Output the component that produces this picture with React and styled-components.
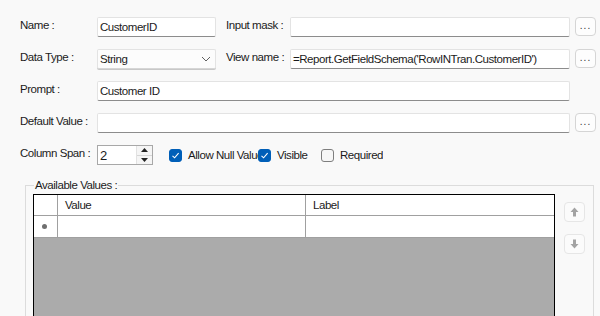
import React from 'react';
import styled, { createGlobalStyle } from 'styled-components';

const GlobalStyle = createGlobalStyle`
  html, body {
    margin: 0;
    padding: 0;
    background: #f9f9f9;
    overflow: hidden;
  }
  body {
    font-family: "Liberation Sans", Arial, sans-serif;
    font-size: 11.5px;
    letter-spacing: -0.45px;
    color: #1b1b1b;
  }
`;

const Page = styled.div`
  width: 600px;
  height: 316px;
  background: #f9f9f9;
  overflow: hidden;
`;

const Form = styled.div`
  display: grid;
  grid-template-columns: 77px 119px 74px 280px 5px 21px;
  grid-auto-rows: 20px;
  row-gap: 12px;
  padding: 17px 0 0 20px;
`;

const Label = styled.div`
  grid-column: ${p => p.$col || 1};
  padding-left: ${p => p.$indent || 0}px;
  padding-top: 2px;
  white-space: nowrap;
`;

const TextBox = styled.div`
  grid-column: ${p => p.$span || 'auto'};
  box-sizing: border-box;
  height: 20px;
  background: #ffffff;
  border: 1px solid #e3e3e3;
  border-bottom-color: #8c8c8c;
  border-radius: 2px;
  padding: 0 2px;
  display: flex;
  align-items: center;
  white-space: nowrap;
  overflow: hidden;
`;

const Select = styled(TextBox)`
  justify-content: space-between;
  padding-right: 4px;
  border-bottom-color: #d6d6d6;
  box-shadow: 0 1px 0 #c8c8c8;
  background: #fcfcfc;
`;

const DotsButton = styled.div`
  grid-column: 6;
  box-sizing: border-box;
  height: 19px;
  border: 1px solid #d5d5d5;
  border-radius: 4px;
  background: #fdfdfd;
  display: flex;
  align-items: center;
  justify-content: center;
  font-size: 10px;
  letter-spacing: 1px;
  padding-bottom: 3px;
  color: #333;
`;

const OptionsRow = styled.div`
  grid-column: 2 / 7;
  display: flex;
  align-items: center;
`;

const Spinner = styled.div`
  box-sizing: border-box;
  width: 56px;
  height: 20px;
  border: 1px solid #a8a8a8;
  background: #fff;
  display: flex;
  align-items: stretch;
  margin-right: 16px;
`;

const SpinValue = styled.div`
  flex: 1;
  padding-left: 2px;
  display: flex;
  align-items: center;
  font-size: 13px;
`;

const SpinButtons = styled.div`
  width: 15px;
  display: flex;
  flex-direction: column;
  border-left: 1px solid #e2e2e2;
  background: #f5f5f5;
`;

const SpinButton = styled.div`
  flex: 1;
  display: flex;
  align-items: center;
  justify-content: center;
  border-bottom: ${p => (p.$top ? '1px solid #d6d6d6' : 'none')};
`;

const CheckItem = styled.div`
  display: flex;
  align-items: center;
  gap: 6px;
  width: ${p => (p.$width ? `${p.$width}px` : 'auto')};
  overflow: hidden;
  white-space: nowrap;
  flex-shrink: 0;
`;

const Box = styled.div`
  box-sizing: border-box;
  flex-shrink: 0;
  width: 13px;
  height: 13px;
  border-radius: 3px;
  background: ${p => (p.$checked ? '#005fb8' : '#f6f6f6')};
  border: 1px solid ${p => (p.$checked ? '#005fb8' : '#7e7e7e')};
  display: flex;
  align-items: center;
  justify-content: center;
`;

const GroupBox = styled.fieldset`
  margin: 14px 7px 0 25px;
  padding: 3px 8px 0 7px;
  border: 1px solid #dcdcdc;
  border-bottom: none;
  height: 140px;
  display: flex;
  gap: 9px;
  align-items: flex-start;
`;

const Legend = styled.legend`
  padding: 0 1px;
  margin-left: 1px;
  line-height: 12px;
`;

const Grid = styled.div`
  box-sizing: border-box;
  width: 522px;
  height: 140px;
  border: 1px solid #000;
  background: #ababab;
  display: flex;
  flex-direction: column;
`;

const GridRow = styled.div`
  box-sizing: border-box;
  display: grid;
  grid-template-columns: 24px 248px 1fr;
  height: ${p => p.$h}px;
  background: #fff;
  border-bottom: 1px solid #a0a0a0;
`;

const Cell = styled.div`
  display: flex;
  align-items: center;
  justify-content: ${p => (p.$center ? 'center' : 'flex-start')};
  padding-left: ${p => (p.$center ? 0 : 7)}px;
  border-right: ${p => (p.$last ? 'none' : '1px solid #a0a0a0')};
`;

const NewRowMark = styled.div`
  width: 5px;
  height: 5px;
  border-radius: 50%;
  background: #6f6f6f;
  margin-right: 2px;
`;

const MoveButtons = styled.div`
  display: flex;
  flex-direction: column;
  gap: 12px;
  padding-top: 8px;
`;

const MoveButton = styled.div`
  box-sizing: border-box;
  width: 21px;
  height: 20px;
  border: 1px solid #e6e6e6;
  border-radius: 4px;
  background: #fbfbfb;
  display: flex;
  align-items: center;
  justify-content: center;
`;

const Check = () => (
  <svg width="9" height="9" viewBox="0 0 9 9">
    <path d="M1.5 4.8 L3.6 6.8 L7.6 2.2" fill="none" stroke="#fff" strokeWidth="1.1" />
  </svg>
);

const Chevron = () => (
  <svg width="10" height="6" viewBox="0 0 10 6">
    <path d="M1 1 L5 5 L9 1" fill="none" stroke="#606060" strokeWidth="1" />
  </svg>
);

const Tri = ({ up }) => (
  <svg width="7" height="4" viewBox="0 0 7 4">
    <path d={up ? 'M0 4 L3.5 0 L7 4 Z' : 'M0 0 L3.5 4 L7 0 Z'} fill="#222" />
  </svg>
);

const Arrow = ({ up }) => (
  <svg width="9" height="10" viewBox="0 0 9 10">
    <path
      d={up ? 'M4.5 0.5 L8.5 5 L6 5 L6 9.5 L3 9.5 L3 5 L0.5 5 Z' : 'M4.5 9.5 L8.5 5 L6 5 L6 0.5 L3 0.5 L3 5 L0.5 5 Z'}
      fill="#a3a3a3"
    />
  </svg>
);

export default function App() {
  return (
    <Page>
      <GlobalStyle />
      <Form>
        <Label>Name :</Label>
        <TextBox>CustomerID</TextBox>
        <Label $col={3} $indent={10}>Input mask :</Label>
        <TextBox $span="4" />
        <DotsButton>...</DotsButton>

        <Label>Data Type :</Label>
        <Select>
          <span>String</span>
          <Chevron />
        </Select>
        <Label $col={3} $indent={10}>View name :</Label>
        <TextBox $span="4">=Report.GetFieldSchema('RowINTran.CustomerID')</TextBox>
        <DotsButton>...</DotsButton>

        <Label>Prompt :</Label>
        <TextBox $span="2 / 5">Customer ID</TextBox>

        <Label>Default Value :</Label>
        <TextBox $span="2 / 5" />
        <DotsButton>...</DotsButton>

        <Label>Column Span :</Label>
        <OptionsRow>
          <Spinner>
            <SpinValue>2</SpinValue>
            <SpinButtons>
              <SpinButton $top><Tri up /></SpinButton>
              <SpinButton><Tri /></SpinButton>
            </SpinButtons>
          </Spinner>
          <CheckItem $width={89}>
            <Box $checked><Check /></Box>
            Allow Null Value
          </CheckItem>
          <CheckItem $width={63}>
            <Box $checked><Check /></Box>
            Visible
          </CheckItem>
          <CheckItem>
            <Box />
            Required
          </CheckItem>
        </OptionsRow>
      </Form>

      <GroupBox>
        <Legend>Available Values :</Legend>
        <Grid>
          <GridRow $h={21}>
            <Cell $center />
            <Cell>Value</Cell>
            <Cell $last>Label</Cell>
          </GridRow>
          <GridRow $h={22}>
            <Cell $center><NewRowMark /></Cell>
            <Cell />
            <Cell $last />
          </GridRow>
        </Grid>
        <MoveButtons>
          <MoveButton><Arrow up /></MoveButton>
          <MoveButton><Arrow /></MoveButton>
        </MoveButtons>
      </GroupBox>
    </Page>
  );
}
